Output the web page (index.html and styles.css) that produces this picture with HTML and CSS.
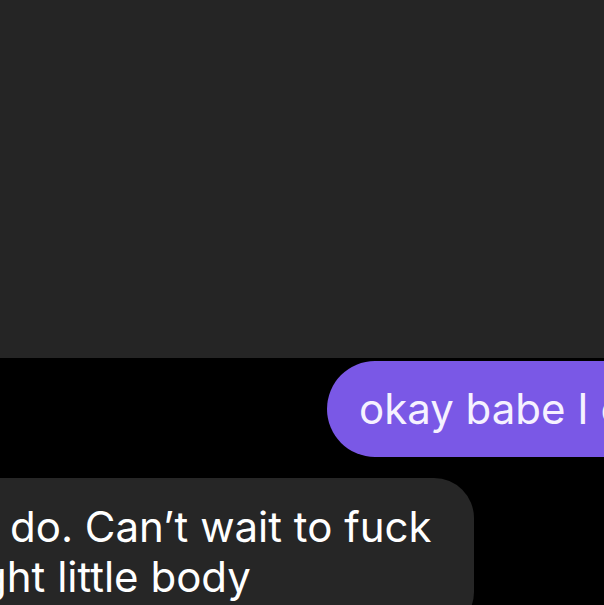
FILE: index.html
```html
<!DOCTYPE html>
<html>
<head>
<meta charset="utf-8">
<link rel="stylesheet" href="styles.css">
</head>
<body>
<div class="screen">
  <div class="header"></div>
  <div class="thread">
    <div class="row row-out">
      <div class="bubble out">okay babe I c</div>
    </div>
    <div class="row row-in">
      <div class="bubble in">
        <span class="line">do. Can’t wait to fuck</span>
        <span class="line line-cut">ght little body</span>
      </div>
    </div>
  </div>
</div>
</body>
</html>
```

FILE: styles.css
```css
html, body {
  margin: 0;
  padding: 0;
  background: #000;
  width: 604px;
  height: 605px;
  overflow: hidden;
}
.screen {
  width: 604px;
  height: 605px;
  display: flex;
  flex-direction: column;
  overflow: hidden;
  font-family: Inter, "Liberation Sans", sans-serif;
}
.header {
  height: 358px;
  background: #252525;
  flex: none;
}
.thread {
  display: flex;
  flex-direction: column;
  gap: 21px;
  padding-top: 3px;
}
.row {
  display: flex;
}
.row-out {
  justify-content: flex-start;
  padding-left: 327px;
}
.bubble {
  font-size: 42px;
  line-height: 50px;
  white-space: nowrap;
  color: #fff;
}
.out {
  background: #7a58e6;
  color: #f6f2ff;
  border-radius: 48px 0 0 48px;
  height: 96px;
  box-sizing: border-box;
  padding: 23px 0 23px 32px;
  width: 300px;
  overflow: hidden;
}
.in {
  background: #262626;
  border-radius: 0 40px 40px 0;
  margin-left: -40px;
  padding: 24px 44px 30px 50px;
  width: 420px;
  overflow: hidden;
}
.line {
  display: block;
}
.line-cut {
  margin-left: -29px;
}
```
